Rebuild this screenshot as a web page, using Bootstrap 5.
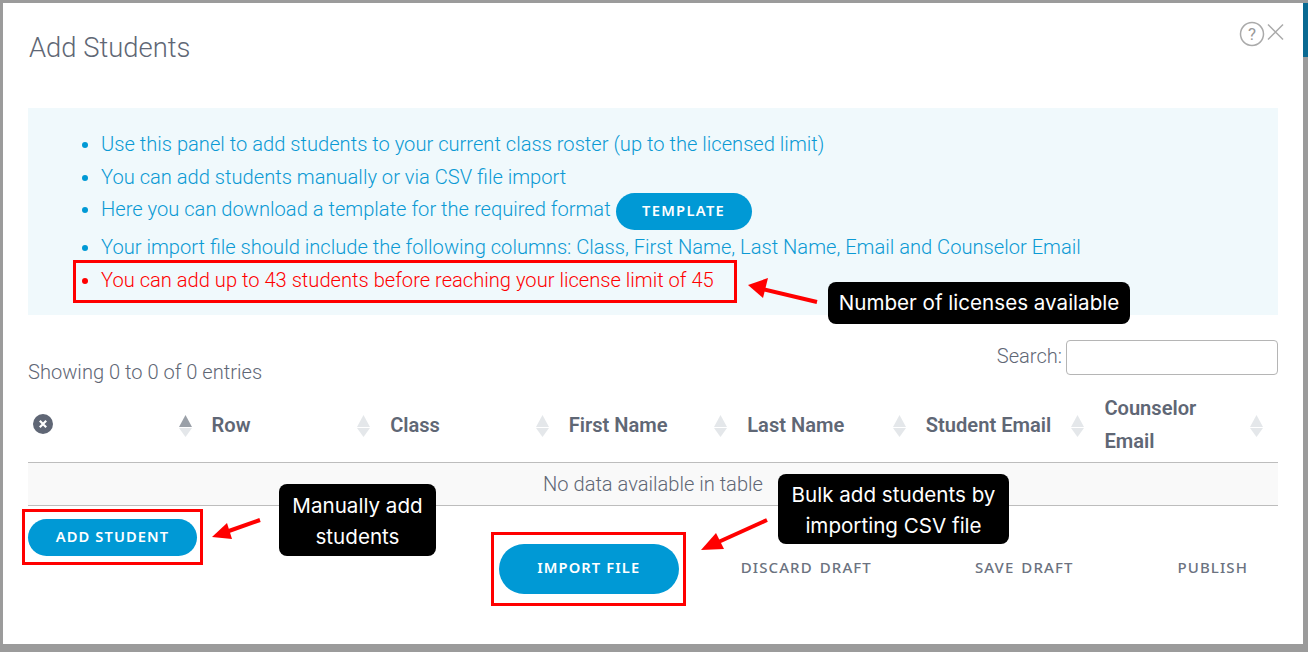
<!DOCTYPE html>
<html lang="en"><head><meta charset="utf-8"><title>Add Students</title>
<link href="https://cdn.jsdelivr.net/npm/bootstrap@5.3.0/dist/css/bootstrap.min.css" rel="stylesheet">
<style>
html,body{height:100%;overflow:hidden}
body{background:#9b9b9b;font-family:Roboto,"Liberation Sans",sans-serif;padding:3px 5px 8px 3px;color:#5f6775}
.strip{position:absolute;right:0;top:3px;width:5px;height:54px;background:#0a6a92}
.sheet{position:relative;height:641px;background:#fff;padding:25px}
.sheet-title{font-size:27.4px;font-weight:300;line-height:40px;margin:0 0 40px 1px;color:#5f6775}
.head-tools{position:absolute;right:14px;top:18px}
.note-panel{background:#f0f9fc;height:207px;padding:20px 0 0 0}
.note-list{margin:0;padding:0 0 0 73px;font-size:20.14px;font-weight:300;line-height:32.7px;color:#0b9ad4}
.note-list li::marker{color:#0099d5}
.note-list .tall{height:38px}
.note-list .warn{color:#f00}
.note-list .warn::marker{color:#f00}
.pill{background:#0099d5;color:#fff;border:0;border-radius:40px;font-family:"Noto Sans",sans-serif;font-weight:600;font-size:14.7px;letter-spacing:1.1px;padding:0 0 3px}
.pill:hover{background:#0099d5;color:#fff}
.pill-tpl{width:136px;height:37px;vertical-align:0;letter-spacing:1.3px}
.pill-add{width:169px;height:37px}
.pill-imp{width:180px;height:50px;margin-right:32px}
.info-row{height:77px;padding-top:25px;font-size:20.1px;font-weight:300}
.info-row label{line-height:33px}
.info-text{padding-top:17px}
.search-box{width:212px;height:35px;border:1px solid #b5b5b5;border-radius:4px;margin-left:4px;vertical-align:top}
.roster{table-layout:fixed;width:100%;margin:0;font-size:20.1px;color:#5f6775}
.roster th{position:relative;font-weight:600;font-size:20.1px;line-height:33px;padding:0 36px 4px 5px;height:70px;vertical-align:middle;border-bottom:1px solid #bdbdbd}
.roster td{height:43px;padding:0;text-align:center;font-weight:300;background:#f9f9f9;border-bottom:1px solid #bdbdbd;vertical-align:middle}
.clear-ico{display:block;margin-top:-2px}
.sort{position:absolute;right:15px;top:23px;width:13px;height:22px}
.foot-row{padding-top:13px}
.foot-actions{margin-top:25px}
.ghost{background:none;border:0;padding:0 30px 4px;height:50px;font-family:"Noto Sans",sans-serif;font-weight:500;font-size:15px;letter-spacing:1.1px;word-spacing:2px;color:#6b7280}
.ghost+.ghost{margin-left:44px}
.ghost-save.ghost{margin-left:43px}
.mark-box{position:absolute;border:3px solid #f00;pointer-events:none}
.box-a{left:70px;top:257px;width:664px;height:43px}
.box-b{left:19px;top:506px;width:181px;height:56px}
.box-c{left:488px;top:529px;width:195px;height:74px}
.call{position:absolute;background:#000;color:#fff;border-radius:8px;font-family:Inter,"Noto Sans",sans-serif;font-size:20.6px;line-height:31px;text-align:center;display:flex;align-items:center;justify-content:center}
.call-a{left:825px;top:279px;width:302px;height:42px;padding-bottom:2px}
.call-b{left:276px;top:481px;width:157px;height:72px;padding-top:1px}
.call-c{left:775px;top:471px;width:231px;height:70px;padding-top:1px}
.arrows{position:absolute;left:-3px;top:-3px;width:1308px;height:652px;pointer-events:none}
</style></head>
<body>
<div class="strip"></div>
<div class="sheet">
  <h1 class="sheet-title">Add Students</h1>
  <div class="head-tools">
    <svg width="50" height="28" viewBox="0 0 50 28"><circle cx="13" cy="13" r="11.5" fill="none" stroke="#aaa" stroke-width="1.5"/><text x="13" y="19" text-anchor="middle" font-family="Roboto" font-size="17" fill="#999">?</text><path d="M29 3.5 44 18.5M44 3.5 29 18.5" stroke="#aaa" stroke-width="1.5" fill="none"/></svg>
  </div>
  <div class="note-panel">
    <ul class="note-list">
      <li>Use this panel to add students to your current class roster (up to the licensed limit)</li>
      <li>You can add students manually or via CSV file import</li>
      <li class="tall">Here you can download a template for the required format <button class="btn pill pill-tpl">TEMPLATE</button></li>
      <li>Your import file should include the following columns: Class, First Name, Last Name, Email and Counselor Email</li>
      <li class="warn">You can add up to 43 students before reaching your license limit of 45</li>
    </ul>
  </div>
  <div class="info-row d-flex justify-content-between">
    <div class="info-text">Showing 0 to 0 of 0 entries</div>
    <label>Search:<input class="search-box" type="text" aria-label="Search"></label>
  </div>
  <table class="roster">
    <thead><tr>
      <th><svg width="20" height="20" viewBox="0 0 20 20" class="clear-ico"><circle cx="10" cy="10" r="10" fill="#5f6675"/><path d="M6.8 6.8 13.2 13.2M13.2 6.8 6.8 13.2" stroke="#fff" stroke-width="2.2"/></svg>
        <svg class="sort" viewBox="0 0 13 22"><path d="M6.5 0 13 12H0z" fill="#9aa0a8"/><path d="M0 13h13L6.5 22z" fill="#e4e7ea"/></svg></th>
      <th>Row<svg class="sort" viewBox="0 0 13 22"><path d="M6.5 0 13 12H0z" fill="#e4e7ea"/><path d="M0 13h13L6.5 22z" fill="#e4e7ea"/></svg></th>
      <th>Class<svg class="sort" viewBox="0 0 13 22"><path d="M6.5 0 13 12H0z" fill="#e4e7ea"/><path d="M0 13h13L6.5 22z" fill="#e4e7ea"/></svg></th>
      <th>First Name<svg class="sort" viewBox="0 0 13 22"><path d="M6.5 0 13 12H0z" fill="#e4e7ea"/><path d="M0 13h13L6.5 22z" fill="#e4e7ea"/></svg></th>
      <th>Last Name<svg class="sort" viewBox="0 0 13 22"><path d="M6.5 0 13 12H0z" fill="#e4e7ea"/><path d="M0 13h13L6.5 22z" fill="#e4e7ea"/></svg></th>
      <th>Student Email<svg class="sort" viewBox="0 0 13 22"><path d="M6.5 0 13 12H0z" fill="#e4e7ea"/><path d="M0 13h13L6.5 22z" fill="#e4e7ea"/></svg></th>
      <th>Counselor Email<svg class="sort" viewBox="0 0 13 22"><path d="M6.5 0 13 12H0z" fill="#e4e7ea"/><path d="M0 13h13L6.5 22z" fill="#e4e7ea"/></svg></th>
    </tr></thead>
    <tbody><tr><td colspan="7">No data available in table</td></tr></tbody>
  </table>
  <div class="foot-row d-flex align-items-start justify-content-between">
    <button class="btn pill pill-add">ADD STUDENT</button>
    <div class="d-flex align-items-center foot-actions">
      <button class="btn pill pill-imp">IMPORT FILE</button>
      <button class="ghost">DISCARD DRAFT</button>
      <button class="ghost ghost-save">SAVE DRAFT</button>
      <button class="ghost">PUBLISH</button>
    </div>
  </div>

  <div class="mark-box box-a"></div><div class="mark-box box-b"></div><div class="mark-box box-c"></div>
  <div class="call call-a">Number of licenses available</div>
  <div class="call call-b">Manually add<br>students</div>
  <div class="call call-c">Bulk add students by<br>importing CSV file</div>
  <svg class="arrows" viewBox="0 0 1308 652">
    <path d="M817 302 762 289" stroke="#f00" stroke-width="4"/><path d="M748 285 768 278 763 298z" fill="#f00"/>
    <path d="M260 520 226 532" stroke="#f00" stroke-width="4"/><path d="M212 537 227 523 232 539z" fill="#f00"/>
    <path d="M767 520 714 544" stroke="#f00" stroke-width="4"/><path d="M701 550 716 533 724 549z" fill="#f00"/>
  </svg>
</div>
<script src="https://cdn.jsdelivr.net/npm/bootstrap@5.3.0/dist/js/bootstrap.bundle.min.js"></script>
</body></html>
